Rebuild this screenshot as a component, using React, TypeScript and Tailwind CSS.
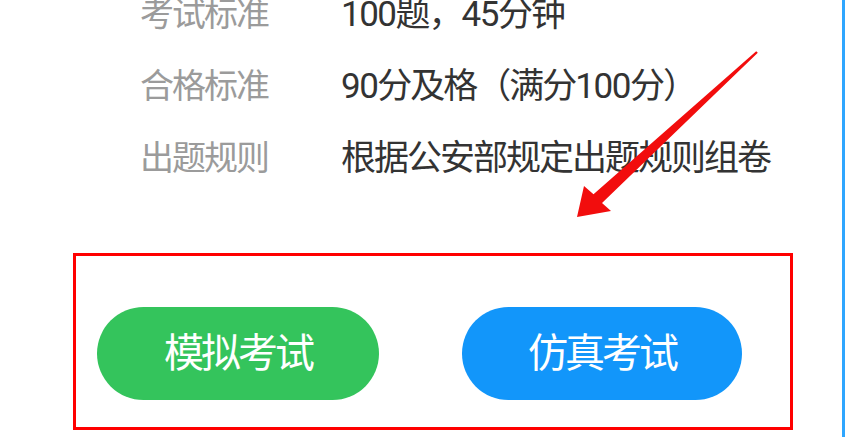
import React from "react";

type Seg = { t: string; d?: boolean };

const rows: { k: string; v: Seg[] }[] = [
  { k: "考试标准", v: [{ t: "100", d: true }, { t: "题，" }, { t: "45", d: true }, { t: "分钟" }] },
  {
    k: "合格标准",
    v: [
      { t: "90", d: true },
      { t: "分及格（满分" },
      { t: "100", d: true },
      { t: "分）" },
    ],
  },
  { k: "出题规则", v: [{ t: "根据公安部规定出题规则组卷" }] },
];

export default function App() {
  return (
    <div
      className="relative w-[845px] h-[437px] overflow-hidden bg-white border-r-[3px] border-[#2ea6ff]"
      style={{ fontFamily: 'Roboto, "Noto Sans CJK SC", sans-serif' }}
    >
      <div className="flex flex-col -mt-[22px]">
        {rows.map(({ k, v }) => (
          <div key={k} className="flex items-center h-[72px]">
            <div className="ml-[140px] w-[201px] text-[34px] leading-none tracking-[-2px] text-[#9b9b9b] whitespace-nowrap">
              {k}
            </div>
            <div className="text-[35px] leading-none text-[#333333] whitespace-nowrap">
              {v.map((s, i) =>
                s.d ? (
                  <span key={i} className="tracking-[-1.5px]">
                    {s.t}
                  </span>
                ) : (
                  <span key={i} className="tracking-[-2px]">
                    {s.t}
                  </span>
                )
              )}
            </div>
          </div>
        ))}
      </div>

      <div className="ml-[73px] mt-[59px] w-[720px] h-[177px] border-[3px] border-[#ff0000] flex items-start pl-[21px] pt-[51px]">
        <div className="w-[282px] h-[93px] rounded-full bg-[#34c45c] flex items-center justify-center text-white text-[40px] leading-none tracking-[-3px]">
          模拟考试
        </div>
        <div className="ml-[83px] w-[280px] h-[93px] rounded-full bg-[#1296fa] flex items-center justify-center text-white text-[40px] leading-none tracking-[-3px]">
          仿真考试
        </div>
      </div>

      <svg
        className="absolute left-0 top-0 pointer-events-none"
        width="845"
        height="437"
        viewBox="0 0 845 437"
      >
        <polygon
          points="756.2,51.2 757.8,52.8 602,203 611,211 577,217 584,186 593.5,194.2"
          fill="#f20d0d"
        />
      </svg>
    </div>
  );
}
